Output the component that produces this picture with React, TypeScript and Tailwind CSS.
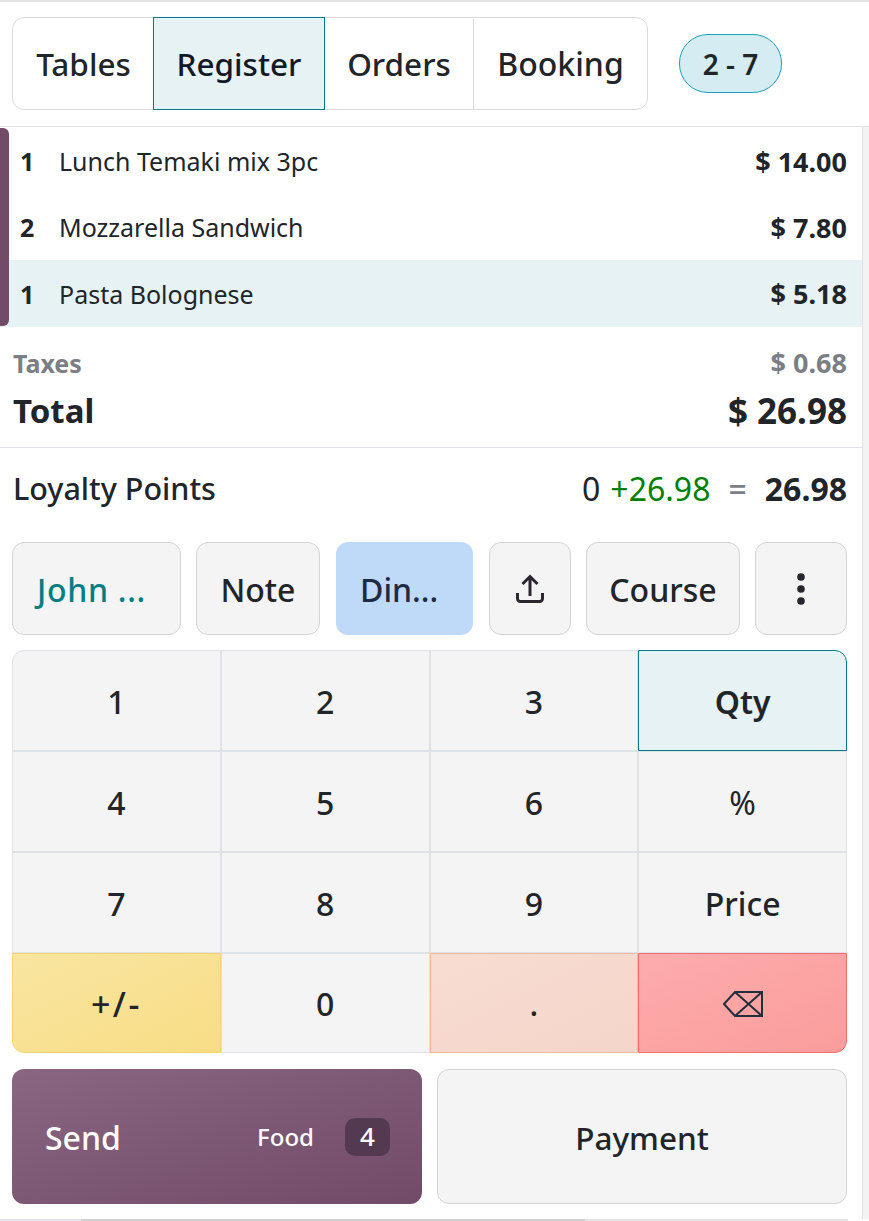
const lines = [
  { qty: "1", name: "Lunch Temaki mix 3pc", price: "$ 14.00", height: "h-[66px]" },
  { qty: "2", name: "Mozzarella Sandwich", price: "$ 7.80", height: "h-[66px]" },
  { qty: "1", name: "Pasta Bolognese", price: "$ 5.18", height: "h-[67px]", selected: true },
]

const keyBase =
  "flex items-center justify-center border pt-[2px] text-[32px] font-medium text-[#212529]"
const keyPlain = keyBase + " border-[#dee2e6] bg-[#f4f4f4]"

function UploadIcon() {
  return (
    <svg width="32" height="32" viewBox="0 0 32 32" fill="none" stroke="#2b2530" strokeWidth="3">
      <path d="M16 23V4M8.5 11 16 3.500l7.500 7.500" />
      <path d="M3.500 20v5.500a3 3 0 0 0 3 3h19a3 3 0 0 0 3-3V20" />
    </svg>
  )
}

function BackspaceIcon() {
  return (
    <svg width="40" height="26" viewBox="0 0 40 26" fill="none" stroke="#212f3d" strokeWidth="2">
      <path d="M12 1h27v24H12L1 13z" />
      <path d="M12 1l27 24M12 25L39 1" />
    </svg>
  )
}

export default function App() {
  return (
    <div className="flex h-[1221px] w-[869px] flex-col overflow-hidden bg-white font-['Noto_Sans',sans-serif] text-[#212529]">
      <div className="h-[2px] shrink-0 bg-[#e3e3e3]" />

      {/* Top nav */}
      <header className="flex h-[125px] shrink-0 items-start border-b border-[#e0e0e6] pl-3 pt-[15px]">
        <div className="flex h-[93px] w-[636px] rounded-xl border border-[#d8dadd] pt-px text-[31.5px] font-medium">
          <div className="flex w-[140px] items-center justify-center pl-px">Tables</div>
          <div className="-mt-[2px] -mb-px flex w-[172px] items-center justify-center border border-[#017e84] bg-[#e6f2f3] pt-px text-[#111827]">
            Register
          </div>
          <div className="flex w-[149px] items-center justify-center border-r border-[#d8dadd]">Orders</div>
          <div className="flex flex-1 items-center justify-center text-[32px]">Booking</div>
        </div>
        <div className="ml-[31px] mt-[17px] flex h-[59px] w-[103px] items-center justify-center rounded-[29px] border border-[#17a2b8] bg-[#d4ecf2] text-[28px] font-semibold">
          2 - 7
        </div>
      </header>

      <div className="flex min-h-0 flex-1">
        <main className="flex w-[862px] shrink-0 flex-col">
          {/* Order lines */}
          <div className="relative mt-px flex flex-col">
            <div className="absolute left-0 top-0 h-[198px] w-[9px] rounded-r-md bg-[#714b67]" />
            {lines.map((l) => (
              <div
                key={l.name}
                className={`flex items-center pl-[20px] pr-[15px] pt-[2px] text-[25px] ${l.height} ${l.selected ? "bg-[#e6f2f3]" : ""}`}
              >
                <span className="w-[39px] font-bold">{l.qty}</span>
                <span className="flex-1">{l.name}</span>
                <span className="text-[27px] font-bold">{l.price}</span>
              </div>
            ))}
          </div>

          {/* Totals */}
          <div className="flex h-[121px] flex-col border-b border-[#e0e0e6] pl-[13px] pr-[15px] pt-[18px]">
            <div className="flex items-center justify-between text-[25px] font-bold leading-[36px] text-[#7b7f85]">
              <span>Taxes</span>
              <span className="text-[27px]">$ 0.68</span>
            </div>
            <div className="mt-[7px] flex items-center justify-between text-[33px] font-bold leading-[46px]">
              <span>Total</span>
              <span className="text-[35px]">$ 26.98</span>
            </div>
          </div>

          {/* Loyalty */}
          <div className="flex h-[84px] items-center justify-between pb-[2px] pl-[13px] pr-[15px] text-[30.500px] font-medium">
            <span>Loyalty Points</span>
            <span className="flex items-center text-[32px]">
              <span className="font-normal">0</span>
              <span className="ml-[10px] font-normal text-[#008000]">+26.98</span>
              <span className="ml-[18px] text-[#7b7f85]">=</span>
              <span className="ml-[18px] font-bold">26.98</span>
            </span>
          </div>

          {/* Action buttons */}
          <div className="mt-[10px] flex h-[93px] gap-[15px] pl-3 text-[32px] font-medium">
            <div className="flex w-[169px] items-center rounded-xl border border-[#d4d4d4] bg-[#f4f4f4] pl-[24px] pt-[2px] tracking-[0.7px] text-[#017e84]">
              John ...
            </div>
            <div className="flex w-[124px] items-center justify-center rounded-xl border border-[#d4d4d4] bg-[#f4f4f4] pt-[2px]">
              Note
            </div>
            <div className="ml-px flex w-[137px] items-center rounded-xl bg-[#bfd9f8] pl-[24px] pt-[2px] text-[#1f2a44]">
              Din...
            </div>
            <div className="ml-px flex w-[82px] items-center justify-center rounded-xl border border-[#d4d4d4] bg-[#f4f4f4]">
              <UploadIcon />
            </div>
            <div className="flex w-[154px] items-center justify-center rounded-xl border border-[#d4d4d4] bg-[#f4f4f4] pt-[2px]">
              Course
            </div>
            <div className="flex w-[92px] items-center justify-center rounded-xl border border-[#d4d4d4] bg-[#f4f4f4]">
              <svg width="10" height="34" viewBox="0 0 10 34" fill="#2b2530">
                <circle cx="5" cy="5" r="3.800" />
                <circle cx="5" cy="17" r="3.800" />
                <circle cx="5" cy="29" r="3.800" />
              </svg>
            </div>
          </div>

          {/* Numpad */}
          <div className="ml-3 mt-[15px] grid h-[403px] w-[835px] grid-cols-4 grid-rows-[101px_101px_101px_100px]">
            <div className={keyPlain + " rounded-tl-xl"}>1</div>
            <div className={keyPlain}>2</div>
            <div className={keyPlain}>3</div>
            <div className={keyBase + " rounded-tr-xl border-[#017e84] bg-[#e6f2f3] font-semibold text-[#0b0f14]"}>Qty</div>
            <div className={keyPlain}>4</div>
            <div className={keyPlain}>5</div>
            <div className={keyPlain}>6</div>
            <div className={keyPlain + " font-normal"}>%</div>
            <div className={keyPlain}>7</div>
            <div className={keyPlain}>8</div>
            <div className={keyPlain}>9</div>
            <div className={keyPlain}>Price</div>
            <div className={keyBase + " rounded-bl-xl border-[#f5d56a] bg-gradient-to-br from-[#f9e5a0] to-[#f7dd85] !text-[34px] tracking-[2.5px]"}>+/-</div>
            <div className={keyPlain}>0</div>
            <div className={keyBase + " border-[#f3b8a0] bg-gradient-to-br from-[#f8dcd2] to-[#f4d5c9]"}>.</div>
            <div className={keyBase + " rounded-br-xl border-[#f26d6d] bg-gradient-to-br from-[#fdacac] to-[#fa9c9c]"}>
              <BackspaceIcon />
            </div>
          </div>

          {/* Send / Payment */}
          <div className="ml-3 mt-4 flex h-[135px] w-[835px] gap-[15px]">
            <div className="flex w-[410px] items-center rounded-xl bg-gradient-to-br from-[#8a6683] to-[#714b67] pl-[33px] pr-[32px] text-white">
              <span className="mt-[2px] flex-1 text-[32px] font-medium">Send</span>
              <span className="text-[24px] font-medium">Food</span>
              <span className="ml-[31px] flex h-[38px] w-[45px] items-center justify-center rounded-[10px] bg-[#533a50] text-[26px] font-medium">
                4
              </span>
            </div>
            <div className="flex flex-1 items-center justify-center rounded-xl border border-[#d4d4d4] bg-[#f4f4f4] pt-[2px] text-[31.500px] font-medium">
              Payment
            </div>
          </div>
        </main>

        {/* Scrollbar gutter */}
        <div className="flex-1 border-l border-[#e0e0e6] bg-[#f3f3f3]" />
      </div>

      {/* Horizontal scrollbar remnant */}
      <div className="flex h-[2px] shrink-0">
        <div className="w-[81px] bg-[#e4e4ea]" />
        <div className="w-[504px] bg-[#d0d0d0]" />
        <div className="w-[263px] bg-[#e3e3e3]" />
      </div>
    </div>
  )
}
